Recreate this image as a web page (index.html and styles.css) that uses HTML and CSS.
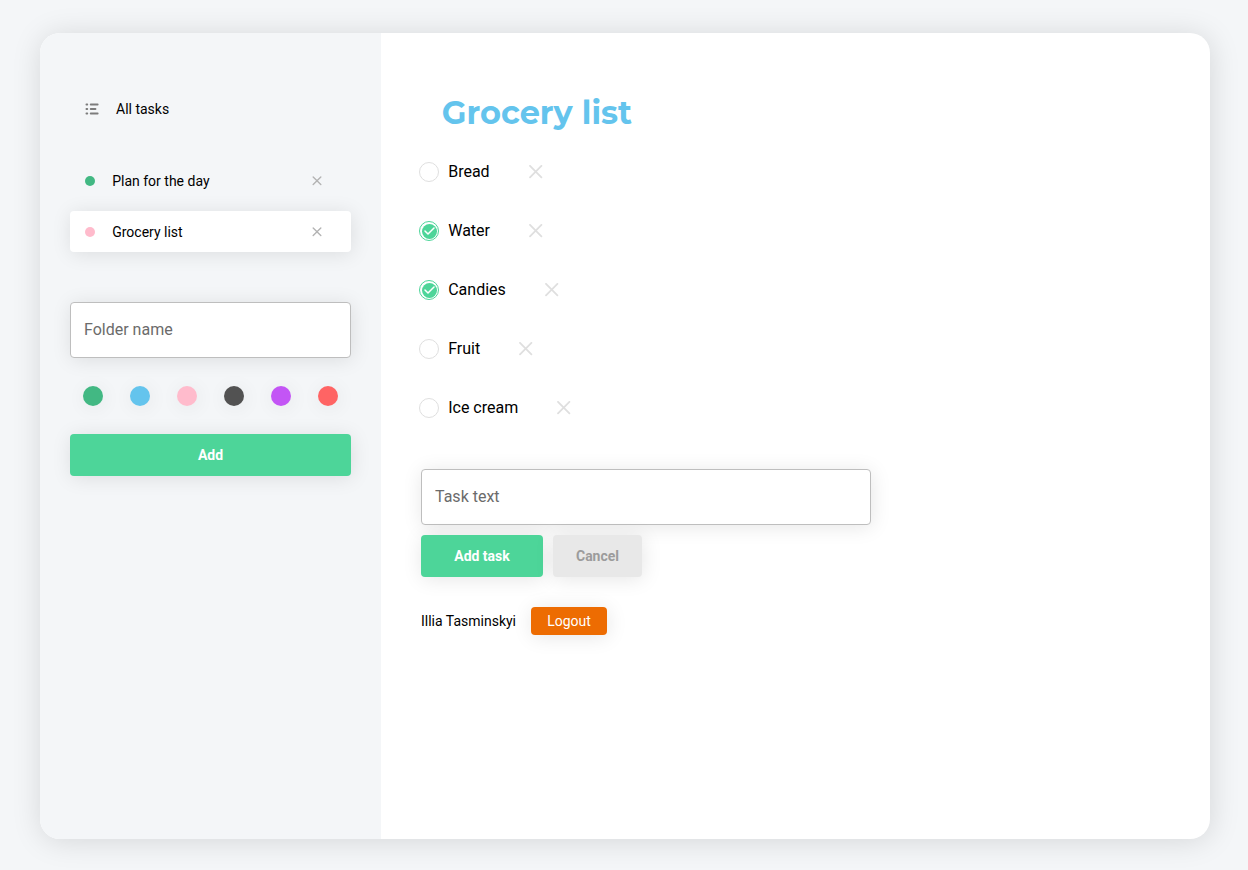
FILE: index.html
```html
<!DOCTYPE html>
<html lang="en">
<head>
<meta charset="utf-8">
<title>Tasks</title>
<link rel="stylesheet" href="styles.css">
</head>
<body>
<svg class="defs" width="0" height="0">
  <symbol id="cross" viewBox="0 0 14 14"><path d="M1 .9l11.4 11.4M12.4 .9L1 12.3" fill="none" stroke="currentColor" stroke-width="1.8" stroke-linecap="round"/></symbol>
  <symbol id="cross-small" viewBox="0 0 10 10"><path d="M1.2 .9l7.6 7.6M8.8 .9L1.2 8.5" fill="none" stroke="currentColor" stroke-width="1.4" stroke-linecap="round"/></symbol>
  <symbol id="check" viewBox="0 0 11 8"><path d="M1 4l3 3 6-6" fill="none" stroke="currentColor" stroke-width="1.5" stroke-linecap="round" stroke-linejoin="round"/></symbol>
</svg>
<div class="todo">
  <aside class="sidebar">
    <div class="all">
      <svg class="all-icon" width="14" height="12" viewBox="0 0 14 12"><path d="M1.4 1.5h.9M5.7 1.5h7M1.4 6h.9M5.7 6h4.8M1.4 10.5h.9M5.7 10.5h7" fill="none" stroke="#7c7c7c" stroke-width="1.8" stroke-linecap="round"/></svg>
      <span>All tasks</span>
    </div>
    <ul class="folders">
      <li class="folder"><i class="dot green"></i><span>Plan for the day</span><svg class="remove"><use href="#cross-small"/></svg></li>
      <li class="folder active"><i class="dot pink"></i><span>Grocery list</span><svg class="remove"><use href="#cross-small"/></svg></li>
    </ul>
    <input class="field" type="text" placeholder="Folder name">
    <div class="colors">
      <i class="color green"></i><i class="color blue"></i><i class="color pink"></i><i class="color black"></i><i class="color purple"></i><i class="color red"></i>
    </div>
    <button class="btn wide">Add</button>
  </aside>
  <main class="tasks">
    <h1>Grocery list</h1>
    <ul class="items">
      <li><i class="box"></i><span>Bread</span><svg class="delete"><use href="#cross"/></svg></li>
      <li><i class="box checked"><b><svg class="tick"><use href="#check"/></svg></b></i><span>Water</span><svg class="delete"><use href="#cross"/></svg></li>
      <li><i class="box checked"><b><svg class="tick"><use href="#check"/></svg></b></i><span>Candies</span><svg class="delete"><use href="#cross"/></svg></li>
      <li><i class="box"></i><span>Fruit</span><svg class="delete"><use href="#cross"/></svg></li>
      <li><i class="box"></i><span>Ice cream</span><svg class="delete"><use href="#cross"/></svg></li>
    </ul>
    <input class="field task-field" type="text" placeholder="Task text">
    <div class="actions"><button class="btn add">Add task</button><button class="btn cancel">Cancel</button></div>
    <div class="user"><span>Illia Tasminskyi</span><button class="logout">Logout</button></div>
  </main>
</div>
</body>
</html>
```

FILE: styles.css
```css
* { box-sizing: border-box; }
body { margin: 0; height: 870px; overflow: hidden; padding: 33px 38px 31px 40px; background: #f4f6f8; font-family: Roboto, sans-serif; font-size: 14px; color: #000; }
ul { list-style: none; margin: 0; padding: 0; }
.defs { display: none; }
.todo { display: flex; height: 806px; background: #fff; border-radius: 20px; overflow: hidden; box-shadow: 1px 2px 30px rgba(0,0,0,.13); }
.sidebar { width: 341px; padding: 60px 30px; background: #f4f6f8; }
.all { display: flex; align-items: center; height: 32px; padding-left: 15px; gap: 17px; }
.all-icon { display: block; }
.folders { display: grid; gap: 10px; margin-top: 35px; }
.folder { display: flex; align-items: center; height: 41px; padding: 0 29px 0 15px; border-radius: 4px; }
.folder.active { background: #fff; box-shadow: 1px 2px 20px rgba(0,0,0,.1); }
.dot { width: 10px; height: 10px; border-radius: 50%; margin-right: 17.2px; }
.remove { width: 10px; height: 10px; margin-left: auto; color: #b4b4b4; }
.green { background: #42b883; }
.blue { background: #64c4ed; }
.pink { background: #ffbbcc; }
.black { background: #525252; }
.purple { background: #c355f5; }
.red { background: #ff6464; }
.field { display: block; width: 100%; height: 56px; margin-top: 50px; padding: 0 13px 2px; border: 1px solid #bebebe; border-radius: 4px; background: #fff; font: 16px Roboto, sans-serif; box-shadow: 1px 2px 20px rgba(0,0,0,.1); }
.field::placeholder { color: #6b6b6b; opacity: 1; }
.colors { display: flex; justify-content: space-between; padding: 28px 13px; }
.color { width: 20px; height: 20px; border-radius: 50%; box-shadow: 1px 2px 20px rgba(0,0,0,.07); }
.btn { height: 42px; border: 0; border-radius: 4px; padding: 0; background: #4dd599; color: #fff; font: 700 14px Roboto, sans-serif; box-shadow: 1px 2px 20px rgba(0,0,0,.1); }
.wide { display: block; width: 100%; }
.tasks { flex: 1; padding: 59px 38px; }
h1 { margin: 0 0 0 22.8px; font: 700 32px/41px Montserrat, Inter, sans-serif; color: #64c4ed; white-space: nowrap; }
.items { margin-top: 28px; display: grid; gap: 37px; }
.items li { display: flex; align-items: center; height: 22px; font-size: 16px; }
.items span { padding-bottom: 2px; }
.box { display: grid; place-items: center; width: 20px; height: 20px; margin-right: 9.2px; border: 1px solid #dfdfdf; border-radius: 50%; }
.box.checked { border-color: #4dd599; }
.box b { display: grid; place-items: center; width: 15px; height: 15px; border-radius: 50%; background: #4dd599; color: #fff; }
.tick { width: 11px; height: 8px; }
.delete { width: 14px; height: 14px; margin-left: 39px; color: #dfdfdf; }
.task-field { width: 450px; margin: 50px 0 10px 2px; }
.actions { display: flex; gap: 10px; margin-left: 2px; }
.add { width: 122px; }
.cancel { width: 89px; background: #e8e8e8; color: #9c9c9c; }
.user { display: flex; align-items: center; gap: 15px; margin: 30px 0 0 2px; }
.logout { width: 76px; height: 28px; padding: 0; border: 0; border-radius: 4px; background: #ed6c02; color: #fff; font: 14px Roboto, sans-serif; box-shadow: 1px 2px 20px rgba(0,0,0,.1); }
```
